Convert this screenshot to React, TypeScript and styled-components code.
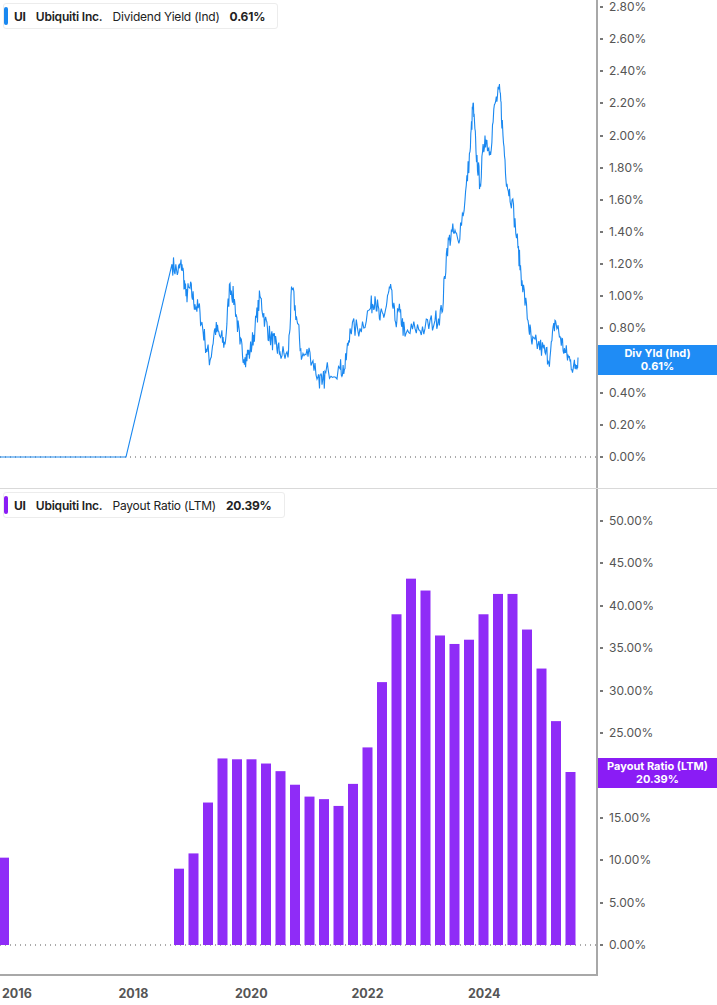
import React from "react";
import styled, { createGlobalStyle } from "styled-components";

const G = createGlobalStyle`
  html,body{margin:0;padding:0;background:#fff;}
  body{font-family:Inter,"Liberation Sans",Arial,sans-serif;width:717px;height:1005px;overflow:hidden;}
`;

const Page = styled.div`display:flex;flex-direction:column;width:717px;height:1005px;`;
const Pane = styled.div<{ h: number; border?: boolean }>`
  position:relative;display:flex;height:${p => p.h}px;
  border-bottom:${p => (p.border ? "1px solid #d9d9d9" : "none")};
  width:717px;
`;
const Plot = styled.div<{ last?: boolean }>`
  position:relative;width:598px;border-right:2px solid #a8a8a8;box-sizing:border-box;
  border-bottom:${p => (p.last ? "2px solid #a8a8a8" : "none")};
`;
const Legend = styled.div<{ c: string }>`
  position:absolute;left:3px;top:3px;display:flex;gap:10px;align-items:center;
  height:26px;padding:0 12px 0 10px;background:#fff;border:1px solid #ececec;border-radius:3px;
  font-size:12px;letter-spacing:-0.2px;color:#222;box-sizing:border-box;
  &::before{content:"";position:absolute;left:0;top:3px;bottom:3px;width:4px;border-radius:2px;background:${p => p.c};}
`;
const B = styled.span`font-weight:700;`;
const M = styled.span`font-weight:600;`;
const Tag = styled.div<{ c: string; top: number }>`
  position:absolute;left:598px;right:0;top:${p => p.top}px;height:30px;background:${p => p.c};
  color:#fff;font-size:11px;font-weight:700;text-align:center;line-height:13px;padding-top:2px;box-sizing:border-box;z-index:2;
`;
const AxisLabel = styled.div<{ top: number }>`
  position:absolute;left:609px;top:${p => p.top - 8}px;font-size:12px;color:#555;
  &::before{content:"";position:absolute;left:-9px;top:7px;width:3px;height:2px;background:#777;}
`;
const XAxis = styled.div`position:relative;height:31px;width:598px;`;
const XLabel = styled.div<{ x: number }>`position:absolute;top:10px;left:${p => p.x - 16}px;font-size:12.5px;font-weight:700;color:#555;`;

const pts: [number, number][] = [[0,0],[126,0],[172,1.2],[178,1.15],[182,1.2],[186,1.0],[190,1.05],[195,0.95],[200,0.9],[205,0.72],[210,0.6],[215,0.8],[220,0.75],[225,0.7],[230,1.08],[235,0.95],[240,0.7],[245,0.62],[250,0.65],[255,0.8],[260,1.0],[265,0.85],[270,0.75],[275,0.7],[280,0.65],[288,0.62],[292,1.05],[297,0.85],[302,0.62],[310,0.65],[318,0.5],[322,0.45],[328,0.55],[340,0.55],[345,0.55],[350,0.8],[360,0.8],[370,0.92],[375,1.0],[380,0.85],[385,0.9],[390,1.05],[395,0.85],[400,0.9],[405,0.75],[415,0.8],[425,0.8],[435,0.85],[442,0.9],[447,1.3],[452,1.4],[458,1.35],[465,1.6],[470,1.9],[473,2.2],[476,1.9],[480,1.7],[485,2.0],[490,1.9],[495,2.2],[500,2.27],[503,2.0],[507,1.7],[512,1.6],[518,1.3],[522,1.1],[528,0.85],[532,0.7],[538,0.7],[545,0.65],[550,0.62],[555,0.85],[560,0.75],[565,0.65],[570,0.6],[575,0.55],[578,0.62]];

function linePath() {
  let s = 7;
  const rnd = () => { s = (s * 16807) % 2147483647; return s / 2147483647 - 0.5; };
  const out: string[] = [];
  for (let i = 0; i < pts.length; i++) {
    const [x, v] = pts[i];
    const y = 457 - v * 160.7;
    out.push(`${i ? "L" : "M"}${x},${y.toFixed(1)}`);
    if (i >= 2 && i < pts.length - 1) {
      const [x2, v2] = pts[i + 1];
      for (let k = 1; k < 8; k++) {
        const t = k / 8;
        const vv = v + (v2 - v) * t + rnd() * 0.13;
        out.push(`L${(x + (x2 - x) * t).toFixed(1)},${(457 - vv * 160.7).toFixed(1)}`);
      }
    }
  }
  return out.join(" ");
}

const bars = [9, 10.8, 16.8, 22, 21.9, 21.9, 21.4, 20.5, 18.9, 17.5, 17.2, 16.4, 19, 23.3, 31, 39, 43.2, 41.8, 36.5, 35.5, 36, 39, 41.4, 41.4, 37.2, 32.6, 26.4, 20.4];

const topTicks = Array.from({ length: 15 }, (_, i) => i * 0.2);
const botTicks = Array.from({ length: 11 }, (_, i) => i * 5);

export default function App() {
  return (
    <Page>
      <G />
      <Pane h={488} border>
        <Plot>
          <svg width={596} height={488}>
            <line x1={0} x2={596} y1={457} y2={457} stroke="#555" strokeDasharray="1 4" />
            <path d={linePath()} fill="none" stroke="#1a88f0" strokeWidth={1.1} />
          </svg>
          <Legend c="#1a88f0"><B>UI</B><M>Ubiquiti Inc.</M><span>Dividend Yield (Ind)</span><B>0.61%</B></Legend>
        </Plot>
        {topTicks.map(v => <AxisLabel key={v} top={457 - v * 160.7}>{v.toFixed(2)}%</AxisLabel>)}
        <Tag c="#1f8cf5" top={345}>Div Yld (Ind)<br />0.61%</Tag>
      </Pane>
      <Pane h={487}>
        <Plot last>
          <svg width={596} height={485}>
            <line x1={0} x2={596} y1={456} y2={456} stroke="#555" strokeDasharray="1 4" />
            <rect x={0} y={456 - 10.3 * 8.48} width={9} height={10.3 * 8.48} fill="#8f2cf7" />
            {bars.map((v, i) => (
              <rect key={i} x={174 + i * 14.5} y={456 - v * 8.48} width={10} height={v * 8.48} fill="#8f2cf7" />
            ))}
          </svg>
          <Legend c="#8a1cf5"><B>UI</B><M>Ubiquiti Inc.</M><span>Payout Ratio (LTM)</span><B>20.39%</B></Legend>
        </Plot>
        {botTicks.map(v => <AxisLabel key={v} top={456 - v * 8.48}>{v.toFixed(2)}%</AxisLabel>)}
        <Tag c="#8a1cf5" top={269}>Payout Ratio (LTM)<br />20.39%</Tag>
      </Pane>
      <XAxis>
        {[2016, 2018, 2020, 2022, 2024].map((y, i) => <XLabel key={y} x={18 + i * 116.5}>{y}</XLabel>)}
      </XAxis>
    </Page>
  );
}
